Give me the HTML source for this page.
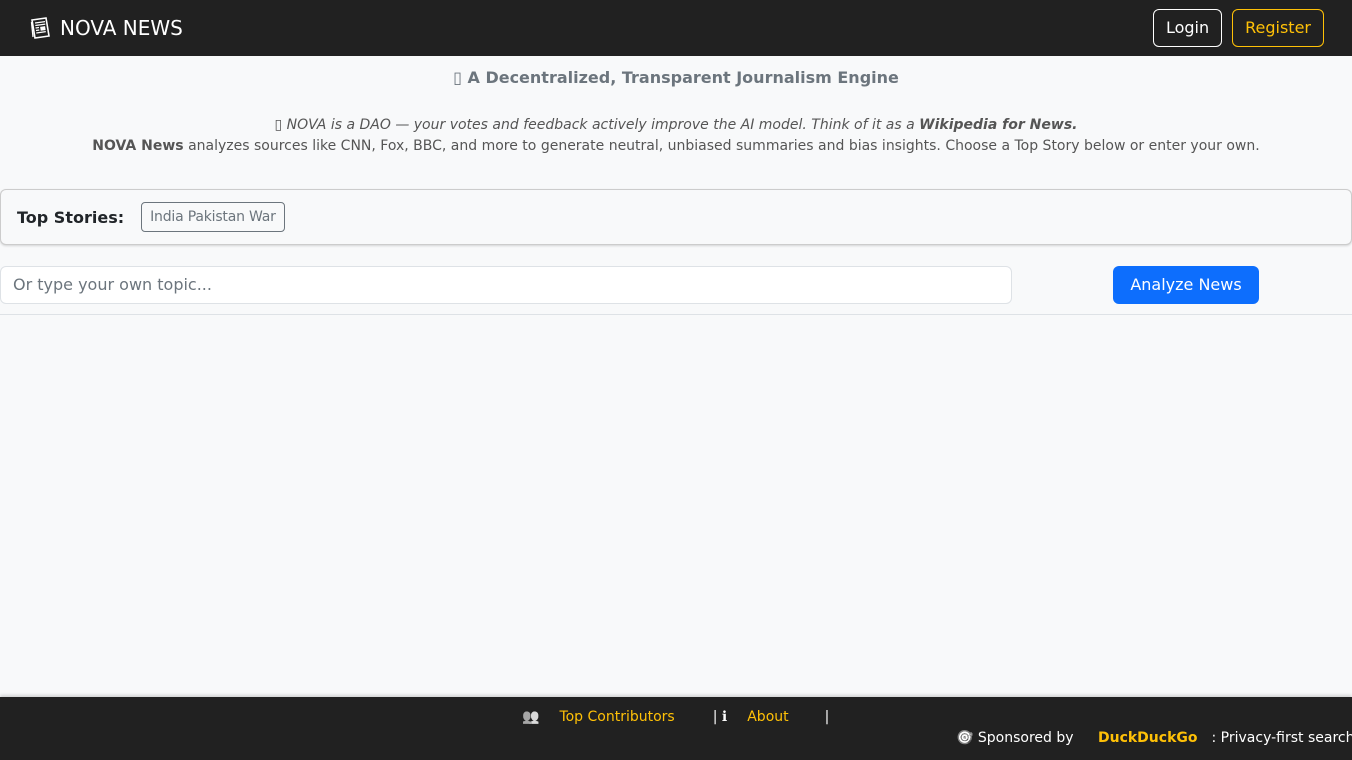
<!DOCTYPE html>
<html><head><meta charset="utf-8"><style>
*{box-sizing:border-box;margin:0;padding:0}
body{width:1352px;height:760px;overflow:hidden;background:#f8f9fa;font-family:"DejaVu Sans","Liberation Sans",sans-serif;color:#212529;position:relative}
.nav{height:56px;background:#212121;display:flex;align-items:center;padding:0 28px 0 30px;justify-content:space-between}
.brand{color:#fff;font-size:20px;display:flex;align-items:center;gap:9px}
.ic{filter:grayscale(1) brightness(1.5) contrast(1.3)}
.btn{display:inline-block;border:1px solid #fff;color:#fff;border-radius:6px;font-size:16px;height:38px;line-height:36px;padding:0 12px}
.reg{border-color:#ffc107;color:#ffc107;margin-left:10px}
h1{font-size:16px;font-weight:bold;color:#6c757d;text-align:center;margin-top:68px;position:absolute;top:0;width:100%;line-height:20px}
.intro{position:absolute;top:115px;width:100%;text-align:center;font-size:14px;color:#555;line-height:21px}
.card{position:absolute;top:189px;left:0;width:1352px;height:56px;border:1px solid #ccc;border-radius:6px;background:#f8f9fa;box-shadow:0 1px 2px rgba(0,0,0,.15);display:flex;align-items:center;padding-left:16px}
.card b{font-size:16px;margin-right:17px}
.tag{border:1px solid #6c757d;border-radius:4px;color:#6c757d;font-size:14px;height:30px;line-height:28px;padding:0 8px;letter-spacing:-0.2px}
.inp{position:absolute;top:266px;left:0;width:1012px;height:38px;border:1px solid #dee2e6;border-radius:6px;background:#fff;font-size:16px;color:#6c757d;line-height:36px;padding-left:12px}
.an{position:absolute;top:266px;left:1113px;width:146px;height:38px;background:#0d6efd;color:#fff;border-radius:6px;font-size:16px;line-height:38px;text-align:center}
hr{position:absolute;top:314px;left:0;width:100%;border:0;border-top:1px solid #dee2e6}
.foot{position:absolute;top:697px;left:0;width:100%;height:63px;background:#212121;color:#fff;font-size:14px;box-shadow:0 -2px 3px rgba(0,0,0,.15)}
.y{color:#ffc107}
</style></head><body>
<div class="nav"><div class="brand"><svg width="21" height="22" viewBox="0 0 21 22"><path d="M2 3 L16 1 L19 19 L5 21 Z" fill="none" stroke="#fff" stroke-width="1.6"/><path d="M1.5 5 L3 20" stroke="#fff" stroke-width="1.3"/><path d="M5 6 L15 4.6 M5.3 8.5 L15.3 7.1 M5.6 11 L9 10.5 M6 13.5 L9.3 13 M6.3 16 L15.8 14.6" stroke="#fff" stroke-width="1.2"/><rect x="10.3" y="9.6" width="5" height="4" fill="#fff" transform="rotate(-8 12 11)"/></svg>NOVA NEWS</div><div><span class="btn">Login</span><span class="btn reg">Register</span></div></div>
<h1>▯ A Decentralized, Transparent Journalism Engine</h1>
<div class="intro"><i>▯ NOVA is a DAO — your votes and feedback actively improve the AI model. Think of it as a <b>Wikipedia for News.</b></i><br><b>NOVA News</b> analyzes sources like CNN, Fox, BBC, and more to generate neutral, unbiased summaries and bias insights. Choose a Top Story below or enter your own.</div>
<div class="card"><b>Top Stories:</b><span class="tag">India Pakistan War</span></div>
<div class="inp">Or type your own topic...</div>
<div class="an">Analyze News</div>
<hr>
<div class="foot">
<div style="position:absolute;top:12px;left:522px;white-space:nowrap"><span class="ic">👥</span><span class="y" style="margin-left:20px">Top Contributors</span><span style="margin-left:38px">| ℹ</span><span class="y" style="margin-left:20px">About</span><span style="margin-left:36px">|</span></div>
<div style="position:absolute;top:33px;left:956px;white-space:nowrap"><span class="ic">🎯</span> Sponsored by <b class="y" style="margin-left:20px">DuckDuckGo</b><span style="margin-left:14px">: Privacy-first search</span></div>
</div>
</body></html>
